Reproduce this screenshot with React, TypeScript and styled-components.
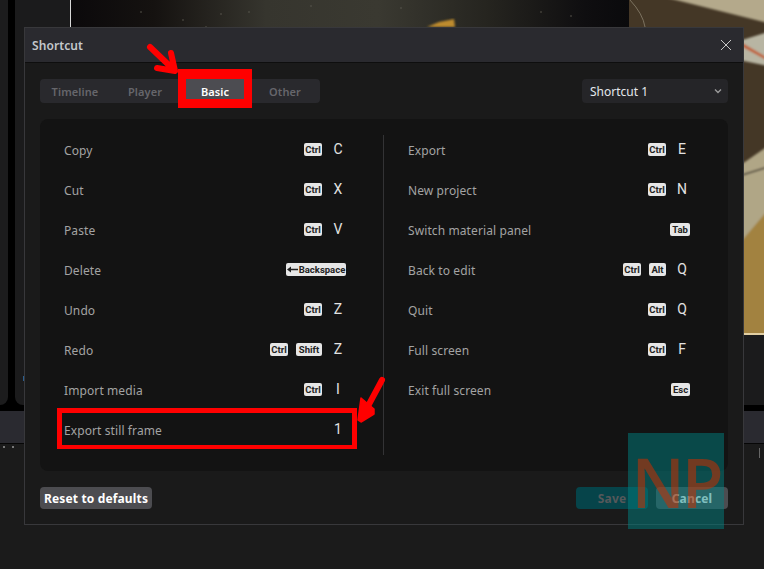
import React from 'react';
import styled, {createGlobalStyle} from 'styled-components';

const GlobalStyle = createGlobalStyle`
  html, body {
    margin: 0;
    padding: 0;
    background: #1b1b1b;
  }
  * {
    box-sizing: border-box;
  }
`;

const Page = styled.div`
  position: relative;
  display: flex;
  flex-direction: column;
  width: 764px;
  height: 569px;
  overflow: hidden;
  background: #1b1b1b;
  font-family: 'Noto Sans', sans-serif;
`;

const TopArea = styled.div`
  display: flex;
  gap: 7px;
  height: 411px;
  padding-bottom: 6px;
  background: #000;
`;

const MediaRail = styled.div`
  width: 8px;
  background: #1c1c1d;
  border-bottom-right-radius: 8px;
`;

const PlayerPane = styled.div`
  flex: 1;
  padding-left: 55px;
  background: #1b1b1c;
  border-bottom-left-radius: 8px;
`;

const Viewer = styled.div`
  height: 335px;
  border-left: 1px solid #d8d8d8;
  border-bottom: 2px solid #e2cfa3;
  svg {
    display: block;
  }
`;

const TimelineBar = styled.div`
  height: 33px;
  background: #2a2a30;
  border-bottom: 1px solid #060606;
`;

const TimelineRuler = styled.div`
  display: flex;
  align-items: flex-start;
  gap: 7px;
  padding: 2px 3px 0;
`;

const RulerDot = styled.span`
  width: 2px;
  height: 2px;
  background: #777;
`;

const RulerTick = styled.span`
  width: 1px;
  height: 10px;
  margin-left: auto;
  margin-right: 1px;
  margin-top: 2px;
  background: #666;
`;

const Dialog = styled.div`
  position: absolute;
  left: 24px;
  top: 27px;
  display: flex;
  flex-direction: column;
  width: 720px;
  height: 498px;
  background: #1a1a1a;
  border: 1px solid #38383b;
`;

const DialogHeader = styled.div`
  display: flex;
  flex: none;
  align-items: center;
  justify-content: space-between;
  height: 35px;
  padding: 0 11px 0 7px;
  background: #2a2a2f;
  border-bottom: 1px solid #0e0e0e;
`;

const DialogTitle = styled.span`
  font-size: 12px;
  font-weight: 600;
  letter-spacing: 0.1px;
  color: #c4c8cc;
`;

const DialogBody = styled.div`
  flex: 1;
  padding: 16px 15px;
`;

const TopRow = styled.div`
  display: flex;
  justify-content: space-between;
  height: 24px;
  margin-bottom: 16px;
`;

const TabList = styled.div`
  display: flex;
  height: 24px;
  background: #29292d;
  border-radius: 4px;
`;

const Tab = styled.div<{$active?: boolean}>`
  display: flex;
  align-items: center;
  justify-content: center;
  width: 70px;
  font-size: 11px;
  font-weight: 600;
  letter-spacing: 0.1px;
  color: ${props => (props.$active ? '#fff' : '#66666b')};
  background: ${props => (props.$active ? '#4c4c51' : 'transparent')};
  border-radius: 4px;
`;

const Select = styled.div`
  display: flex;
  align-items: center;
  justify-content: space-between;
  width: 146px;
  height: 24px;
  padding: 0 6px 0 8px;
  font-size: 12px;
  color: #e4e8ec;
  background: #252528;
  border-radius: 4px;
`;

const ShortcutPanel = styled.div`
  display: flex;
  height: 352px;
  padding: 11px 38px 0 24px;
  background: #131313;
  border-radius: 8px;
`;

const Column = styled.div`
  display: flex;
  flex-direction: column;
  width: 282px;
`;

const ColumnDivider = styled.div`
  width: 1px;
  height: 320px;
  margin: 5px 24px 0 37px;
  background: #333335;
`;

const Row = styled.div`
  display: flex;
  flex: none;
  align-items: center;
  justify-content: space-between;
  height: 40px;
`;

const RowLabel = styled.span`
  font-size: 12px;
  letter-spacing: 0.1px;
  color: #a3a3a3;
`;

const Keys = styled.div`
  display: flex;
  align-items: center;
  gap: 8px;
  margin-bottom: 2px;
`;

const KeyCap = styled.span<{$width: number}>`
  display: inline-flex;
  align-items: center;
  justify-content: center;
  gap: 1px;
  width: ${props => props.$width}px;
  height: 13px;
  font-family: Roboto, sans-serif;
  font-size: 9.5px;
  font-weight: 700;
  white-space: nowrap;
  color: #222;
  background: #e6e6e6;
  border-radius: 2px;
`;

const KeyLetter = styled.span`
  width: 16px;
  font-family: Roboto, sans-serif;
  font-size: 14px;
  font-weight: 400;
  line-height: 16px;
  text-align: center;
  color: #e2e2e2;
`;

const DialogFooter = styled.div`
  display: flex;
  align-items: center;
  gap: 8px;
  margin-top: 16px;
`;

const FooterButton = styled.button<{$variant?: 'primary' | 'default'}>`
  width: ${props => (props.$variant ? '72px' : '112px')};
  height: 22px;
  padding: 0;
  font-family: 'Noto Sans', sans-serif;
  font-size: 12px;
  font-weight: 700;
  letter-spacing: 0.15px;
  color: ${props => (props.$variant === 'primary' ? '#55585a' : '#fff')};
  background: ${props => (props.$variant === 'primary' ? '#06444a' : '#4c4c50')};
  border: 0;
  border-radius: 4px;
  &:first-child {
    margin-right: auto;
  }
`;

const Highlight = styled.div<{$left: number; $top: number; $width: number; $height: number; $edges: string}>`
  position: absolute;
  left: ${props => props.$left}px;
  top: ${props => props.$top}px;
  width: ${props => props.$width}px;
  height: ${props => props.$height}px;
  border-style: solid;
  border-color: #f00;
  border-width: ${props => props.$edges};
`;

const Annotation = styled.svg`
  position: absolute;
  left: 0;
  top: 0;
  pointer-events: none;
`;

const Watermark = styled.div`
  position: absolute;
  left: 628px;
  top: 433px;
  display: flex;
  align-items: center;
  justify-content: center;
  width: 96px;
  height: 96px;
  font-family: 'Open Sans', sans-serif;
  font-size: 68px;
  font-weight: 600;
  letter-spacing: -3px;
  color: rgba(200, 45, 0, 0.55);
  background: rgba(0, 128, 128, 0.5);
`;

const PlayheadMark = styled.span`
  position: absolute;
  left: 23px;
  top: 376px;
  width: 1px;
  height: 5px;
  background: #2b5f8f;
`;

type Shortcut = {label: string; keys?: string[]; letter?: string};

const keyWidths: Record<string, number> = {
  Ctrl: 18,
  Shift: 26,
  Alt: 17,
  Tab: 20,
  Esc: 19,
  Backspace: 60,
};

const leftShortcuts: Shortcut[] = [
  {label: 'Copy', keys: ['Ctrl'], letter: 'C'},
  {label: 'Cut', keys: ['Ctrl'], letter: 'X'},
  {label: 'Paste', keys: ['Ctrl'], letter: 'V'},
  {label: 'Delete', keys: ['Backspace']},
  {label: 'Undo', keys: ['Ctrl'], letter: 'Z'},
  {label: 'Redo', keys: ['Ctrl', 'Shift'], letter: 'Z'},
  {label: 'Import media', keys: ['Ctrl'], letter: 'I'},
  {label: 'Export still frame', letter: '1'},
];

const rightShortcuts: Shortcut[] = [
  {label: 'Export', keys: ['Ctrl'], letter: 'E'},
  {label: 'New project', keys: ['Ctrl'], letter: 'N'},
  {label: 'Switch material panel', keys: ['Tab']},
  {label: 'Back to edit', keys: ['Ctrl', 'Alt'], letter: 'Q'},
  {label: 'Quit', keys: ['Ctrl'], letter: 'Q'},
  {label: 'Full screen', keys: ['Ctrl'], letter: 'F'},
  {label: 'Exit full screen', keys: ['Esc']},
];

const tabs = ['Timeline', 'Player', 'Basic', 'Other'];

function BackArrow() {
  return (
    <svg width="11" height="7" viewBox="0 0 11 7">
      <path d="M0 3.5 4 0.5V2.8H11V4.2H4V6.5Z" fill="#222" />
    </svg>
  );
}

function ShortcutRow({label, keys = [], letter}: Shortcut) {
  return (
    <Row>
      <RowLabel>{label}</RowLabel>
      <Keys>
        {keys.map(key => (
          <KeyCap key={key} $width={keyWidths[key]}>
            {key === 'Backspace' && <BackArrow />}
            {key}
          </KeyCap>
        ))}
        {letter && <KeyLetter>{letter}</KeyLetter>}
      </Keys>
    </Row>
  );
}

function FootagePhoto() {
  return (
    <svg width="693" height="333" viewBox="0 0 693 333">
      <defs>
        <linearGradient id="pan" x1="0" y1="0" x2="1" y2="0">
          <stop offset="0" stopColor="#0b090b" />
          <stop offset="0.15" stopColor="#151210" />
          <stop offset="0.35" stopColor="#36352e" />
          <stop offset="0.55" stopColor="#3a3931" />
          <stop offset="0.75" stopColor="#25241f" />
          <stop offset="0.92" stopColor="#0f0e10" />
          <stop offset="1" stopColor="#0a0a0c" />
        </linearGradient>
        <filter id="soft">
          <feGaussianBlur stdDeviation="1.2" />
        </filter>
      </defs>
      <rect width="693" height="333" fill="#443726" />
      <g filter="url(#soft)">
        <path d="M589 -4H697V23Z" fill="#b4a98b" />
        <path d="M697 32 668 41V60L697 66Z" fill="#b8b5a3" />
        <path d="M668 41 697 58V61L668 45Z" fill="#c0623a" />
        <path d="M668 166 697 146V340H668Z" fill="#b0a686" />
        <path d="M668 244 697 210V340H668Z" fill="#a2823f" />
        <path d="M668 176 697 167" stroke="#3d352b" strokeWidth="1.5" />
      </g>
      <rect width="558" height="30" fill="url(#pan)" />
      <path d="M559 0Q572 14 574 27" fill="none" stroke="#8a826f" strokeWidth="0.8" />
      <path d="M356 27 368 22 383 19 384 27Z" fill="#bd8b2e" filter="url(#soft)" />
      {[
        [112, 20],
        [135, 27],
        [150, 14],
        [178, 12],
        [70, 12],
        [240, 6],
        [330, 8],
        [470, 12],
        [500, 16],
      ].map(([cx, cy]) => (
        <circle key={`${cx}-${cy}`} cx={cx} cy={cy} r="0.8" fill="#5b5a50" />
      ))}
    </svg>
  );
}

function App() {
  return (
    <Page>
      <GlobalStyle />
      <TopArea>
        <MediaRail />
        <PlayerPane>
          <Viewer>
            <FootagePhoto />
          </Viewer>
        </PlayerPane>
      </TopArea>
      <TimelineBar />
      <TimelineRuler>
        <RulerDot />
        <RulerDot />
        <RulerTick />
      </TimelineRuler>
      <PlayheadMark />

      <Dialog>
        <DialogHeader>
          <DialogTitle>Shortcut</DialogTitle>
          <svg width="12" height="12" viewBox="0 0 12 12">
            <path d="M1 1 11 11M11 1 1 11" stroke="#c8c8c8" strokeWidth="1" />
          </svg>
        </DialogHeader>
        <DialogBody>
          <TopRow>
            <TabList>
              {tabs.map(tab => (
                <Tab key={tab} $active={tab === 'Basic'}>
                  {tab}
                </Tab>
              ))}
            </TabList>
            <Select>
              Shortcut 1
              <svg width="8" height="6" viewBox="0 0 8 6">
                <path d="M1 1.5 4 4.5 7 1.5" fill="none" stroke="#9a9a9a" strokeWidth="1.4" />
              </svg>
            </Select>
          </TopRow>
          <ShortcutPanel>
            <Column>
              {leftShortcuts.map(item => (
                <ShortcutRow key={item.label} {...item} />
              ))}
            </Column>
            <ColumnDivider />
            <Column>
              {rightShortcuts.map(item => (
                <ShortcutRow key={item.label} {...item} />
              ))}
            </Column>
          </ShortcutPanel>
          <DialogFooter>
            <FooterButton>Reset to defaults</FooterButton>
            <FooterButton $variant="primary">Save</FooterButton>
            <FooterButton $variant="default">Cancel</FooterButton>
          </DialogFooter>
        </DialogBody>
      </Dialog>

      <Highlight $left={178} $top={69} $width={74} $height={39} $edges="10px 8px 9px" />
      <Highlight $left={57} $top={408} $width={300} $height={41} $edges="5px 5px 4px" />
      <Annotation width="764" height="569" viewBox="0 0 764 569">
        <path d="M150 47 174 70M171 53 175 71 157 68" fill="none" stroke="#f00" strokeWidth="6" strokeLinecap="round" strokeLinejoin="round" />
        <path d="M382 380 367 408" fill="none" stroke="#f00" strokeWidth="6" strokeLinecap="round" />
        <path d="M361 398 374 409 374 414 361 422 358 420Z" fill="#f00" stroke="#f00" strokeWidth="1.5" strokeLinejoin="round" />
      </Annotation>
      <Watermark>NP</Watermark>
    </Page>
  );
}

export default App;
